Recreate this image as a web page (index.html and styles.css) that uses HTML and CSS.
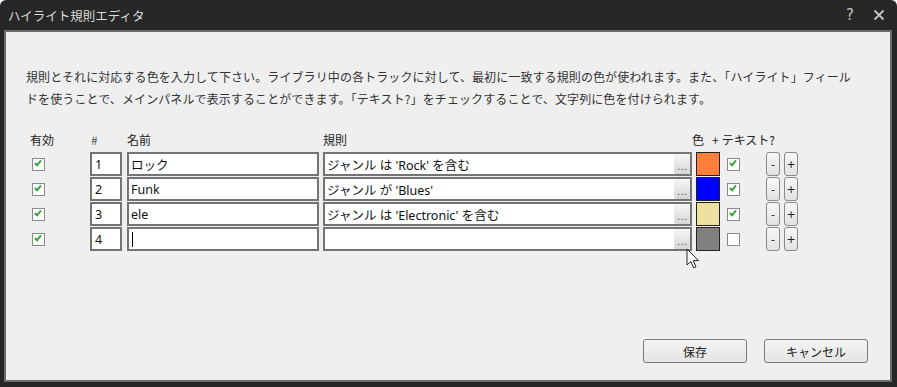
FILE: index.html
```html
<!doctype html>
<html lang="ja">
<head>
    <meta charset="UTF-8">
    <title>ハイライト規則エディタ</title>
    <link rel="stylesheet" href="styles.css">
</head>
<body>
<div class="window">
    <div class="titlebar">
        <span class="title">ハイライト規則エディタ</span>
        <span class="tb-btn help">?</span>
        <span class="tb-btn close">
            <svg width="12" height="12" viewBox="0 0 12 12"><path d="M1.5 1.5 L10.5 10.5 M10.5 1.5 L1.5 10.5" stroke="#c4c4c4" stroke-width="1.8"/></svg>
        </span>
    </div>
    <div class="panel">
        <p class="desc">規則とそれに対応する色を入力して下さい。ライブラリ中の各トラックに対して、最初に一致する規則の色が使われます。また、「ハイライト」フィールドを使うことで、メインパネルで表示することができます。「テキスト?」をチェックすることで、文字列に色を付けられます。</p>

        <div class="rules">
            <div class="hd hd-enabled">有効</div>
            <div class="hd hd-num">#</div>
            <div class="hd">名前</div>
            <div class="hd">規則</div>
            <div class="hd hd-color"><span>色</span><span class="plus">+</span><span>テキスト?</span></div>

            <div class="cell"><span class="check en on"></span></div>
            <div class="cell"><div class="field num">1</div></div>
            <div class="cell"><div class="field">ロック</div></div>
            <div class="cell"><div class="field rule"><span>ジャンル は 'Rock' を含む</span><button class="dots">…</button></div></div>
            <div class="cell"><div class="swatch" style="background:#ff7f3f"></div></div>
            <div class="cell"><span class="check on"></span></div>
            <div class="cell"><button class="pm">-</button></div>
            <div class="cell"><button class="pm">+</button></div>

            <div class="cell"><span class="check en on"></span></div>
            <div class="cell"><div class="field num">2</div></div>
            <div class="cell"><div class="field">Funk</div></div>
            <div class="cell"><div class="field rule"><span>ジャンル が 'Blues'</span><button class="dots">…</button></div></div>
            <div class="cell"><div class="swatch" style="background:#0000ff"></div></div>
            <div class="cell"><span class="check on"></span></div>
            <div class="cell"><button class="pm">-</button></div>
            <div class="cell"><button class="pm">+</button></div>

            <div class="cell"><span class="check en on"></span></div>
            <div class="cell"><div class="field num">3</div></div>
            <div class="cell"><div class="field">ele</div></div>
            <div class="cell"><div class="field rule"><span>ジャンル は 'Electronic' を含む</span><button class="dots">…</button></div></div>
            <div class="cell"><div class="swatch" style="background:#eee09e"></div></div>
            <div class="cell"><span class="check on"></span></div>
            <div class="cell"><button class="pm">-</button></div>
            <div class="cell"><button class="pm">+</button></div>

            <div class="cell"><span class="check en on"></span></div>
            <div class="cell"><div class="field num">4</div></div>
            <div class="cell"><div class="field"><span class="caret"></span></div></div>
            <div class="cell"><div class="field rule"><span></span><button class="dots">…</button></div></div>
            <div class="cell"><div class="swatch" style="background:#808080"></div></div>
            <div class="cell"><span class="check"></span></div>
            <div class="cell"><button class="pm">-</button></div>
            <div class="cell"><button class="pm">+</button></div>
        </div>

        <div class="actions">
            <button class="btn">保存</button>
            <button class="btn">キャンセル</button>
        </div>
    </div>
</div>

<svg class="pointer" width="14" height="22" viewBox="0 0 14 22">
    <path d="M1 1 L1 17 L4.8 13.4 L7.6 19.8 L10 18.8 L7.3 12.6 L12.4 12.6 Z" fill="#fff" stroke="#222" stroke-width="1" stroke-linejoin="round"/>
</svg>
</body>
</html>
```

FILE: styles.css
```css
*, *::after, *::before {
    box-sizing: border-box;
    margin: 0;
    padding: 0;
}

body {
    margin: 0;
    background: #fff;
    font-family: "Noto Sans", "Noto Sans CJK JP", sans-serif;
    font-size: 12px;
    color: #222;
}

.window {
    height: 100vh;
    display: flex;
    flex-direction: column;
    background: #272727;
    border-radius: 6px 6px 0 0;
}

.titlebar {
    height: 30px;
    display: flex;
    align-items: center;
    padding: 0 8px;
    color: #dcdcdc;
}

.title {
    flex: 1;
    font-family: "Noto Sans CJK JP", sans-serif;
    font-size: 12.5px;
}

.tb-btn {
    color: #c4c4c4;
    display: flex;
    align-items: center;
    justify-content: center;
}

.help {
    font-family: "DejaVu Sans", sans-serif;
    font-size: 15px;
    margin-right: 19px;
}

.close {
    margin-right: 4px;
}

.panel {
    flex: 1;
    margin: 0 5px 5px 4px;
    border: 2px solid #6c6c6c;
    background: #efefef;
    display: flex;
    flex-direction: column;
    padding: 34px 22px 17px 20px;
}

.desc {
    width: 826px;
    line-height: 22px;
    font-family: "Noto Sans CJK JP", sans-serif;
    font-size: 12px;
    color: #333;
    letter-spacing: 0.1px;
}

.rules {
    margin-top: 21px;
    display: grid;
    grid-template-columns: 64px 37px 196px 373px 31px 39px 18px 14px;
    grid-template-rows: 20px repeat(4, 24px);
    row-gap: 1px;
}

.hd {
    font-family: "Noto Sans CJK JP", sans-serif;
    color: #222;
    line-height: 18px;
}

.hd-enabled {
    padding-left: 4px;
}

.hd-num {
    color: #555;
    padding-left: 1px;
}

.hd-color {
    grid-column: 5 / 9;
    margin-left: -4px;
    display: flex;
    white-space: nowrap;
}

.hd-color .plus {
    margin: 0 3px 0 8px;
}

.cell {
    display: flex;
    align-items: center;
}

.field {
    width: calc(100% - 4px);
    height: 24px;
    background: #fff;
    border: 2px solid #747474;
    display: flex;
    align-items: center;
    padding-left: 2px;
    color: #111;
    font-size: 12.5px;
    font-family: "Noto Sans", "Noto Sans CJK JP", sans-serif;
    white-space: nowrap;
}

.field.num {
    width: 32px;
    padding-left: 3px;
}

.field.rule span {
    flex: 1;
}

.caret {
    width: 1px;
    height: 15px;
    background: #000;
    margin-left: 1px;
}

.dots {
    width: 16px;
    height: 20px;
    border: none;
    border-radius: 2px;
    background: linear-gradient(#f6f6f6, #d6d6d6);
    color: #555;
    font-size: 10px;
    font-family: "DejaVu Sans", sans-serif;
    line-height: 20px;
    padding-top: 3px;
}

.swatch {
    width: 24px;
    height: 24px;
    border: 1px solid #222;
}

.check {
    width: 13px;
    height: 13px;
    background: #fff;
    border: 1px solid #8a8a8a;
    position: relative;
}

.check.en {
    margin-left: 6px;
}

.check.on::after {
    content: '';
    position: absolute;
    left: 3px;
    top: 0;
    width: 4px;
    height: 7px;
    border: solid #3aa63a;
    border-width: 0 2px 2px 0;
    transform: rotate(40deg);
}

.pm {
    width: 14px;
    height: 24px;
    border: 1px solid #8a8a8a;
    border-radius: 3px;
    background: linear-gradient(#f7f7f7, #e2e2e2);
    font-family: "DejaVu Sans", sans-serif;
    font-size: 11px;
    color: #222;
}

.actions {
    margin-top: auto;
    display: flex;
    justify-content: flex-end;
    gap: 17px;
}

.btn {
    width: 104px;
    height: 24px;
    border: 1px solid #7a7a7a;
    border-radius: 3px;
    background: linear-gradient(#f4f4f4, #e4e4e4);
    font-family: "Noto Sans CJK JP", sans-serif;
    font-size: 12px;
    color: #222;
}

.pointer {
    position: absolute;
    left: 686px;
    top: 248px;
}
```
